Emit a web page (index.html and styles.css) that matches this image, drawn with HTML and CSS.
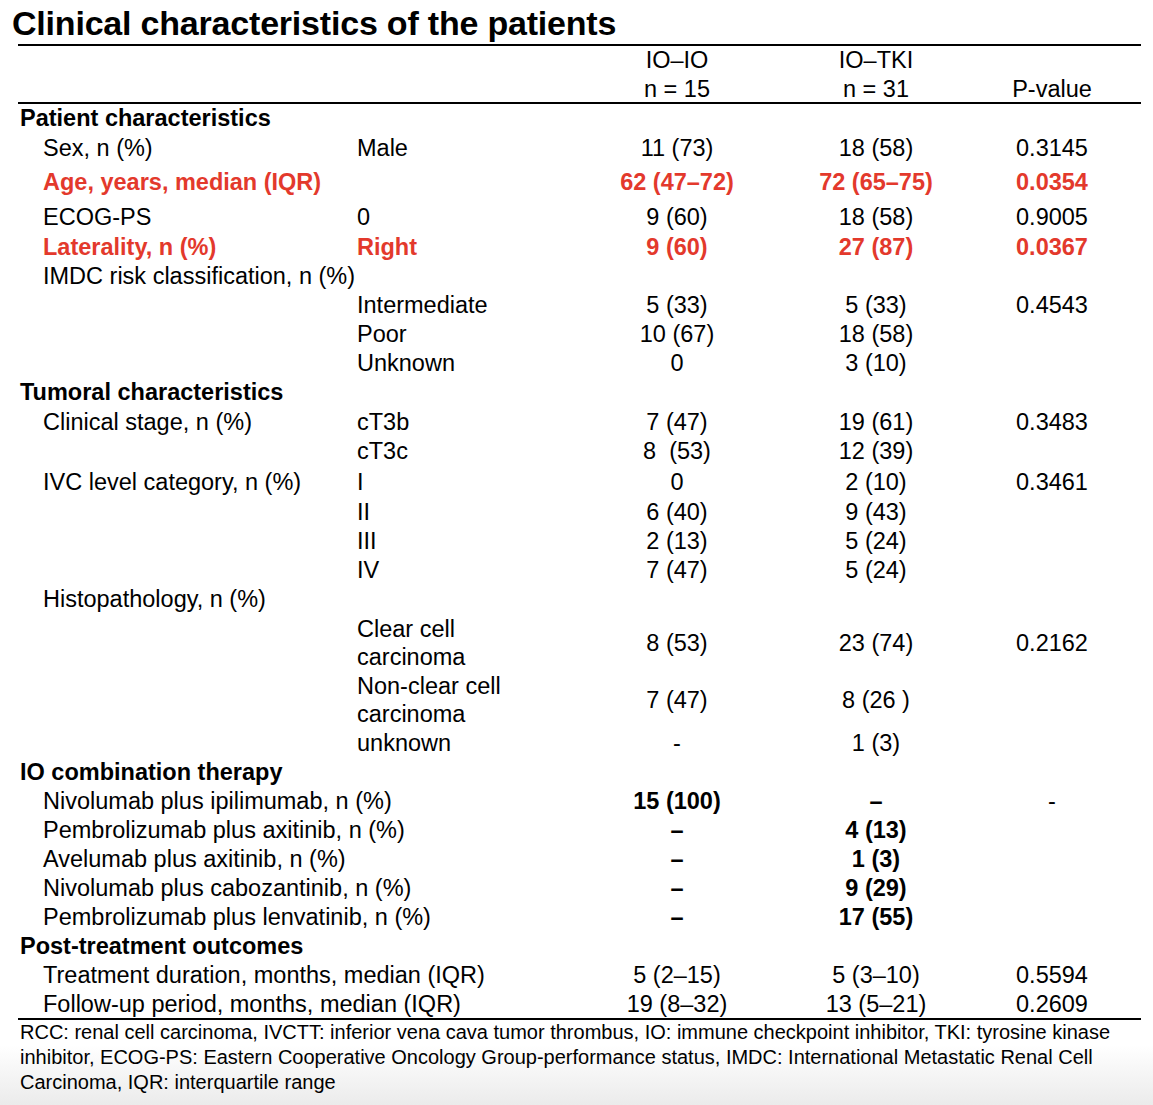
FILE: index.html
```html
<!DOCTYPE html>
<html lang="en">
<head>
  <meta charset="UTF-8" />
  <title>Clinical characteristics of the patients</title>
  <link rel="stylesheet" href="styles.css">
</head>
<body>

  <div class="title">Clinical characteristics of the patients</div>

  <table class="chars">
    <colgroup>
      <col class="c-label">
      <col class="c-sub">
      <col class="c-io">
      <col class="c-tki">
      <col class="c-p">
    </colgroup>
    <thead>
      <tr class="top">
        <td></td><td></td><td class="val">IO–IO</td><td class="val">IO–TKI</td><td class="val pv"></td>
      </tr>
      <tr class="sub">
        <td></td><td></td><td class="val">n = 15</td><td class="val">n = 31</td><td class="val pv">P-value</td>
      </tr>
    </thead>
    <tbody>
      <tr class="h30"><td class="sec" colspan="5">Patient characteristics</td></tr>
      <tr>
        <td class="lbl">Sex, n (%)</td><td>Male</td><td class="val">11 (73)</td><td class="val">18 (58)</td><td class="val pv">0.3145</td>
      </tr>
      <tr class="h40 hit">
        <td class="lbl">Age, years, median (IQR)</td><td></td><td class="val">62 (47–72)</td><td class="val">72 (65–75)</td><td class="val pv">0.0354</td>
      </tr>
      <tr class="h30">
        <td class="lbl">ECOG-PS</td><td>0</td><td class="val">9 (60)</td><td class="val">18 (58)</td><td class="val pv">0.9005</td>
      </tr>
      <tr class="hit">
        <td class="lbl">Laterality, n (%)</td><td>Right</td><td class="val">9 (60)</td><td class="val">27 (87)</td><td class="val pv">0.0367</td>
      </tr>
      <tr><td class="lbl" colspan="5">IMDC risk classification, n (%)</td></tr>
      <tr>
        <td></td><td>Intermediate</td><td class="val">5 (33)</td><td class="val">5 (33)</td><td class="val pv">0.4543</td>
      </tr>
      <tr>
        <td></td><td>Poor</td><td class="val">10 (67)</td><td class="val">18 (58)</td><td class="val pv"></td>
      </tr>
      <tr>
        <td></td><td>Unknown</td><td class="val">0</td><td class="val">3 (10)</td><td class="val pv"></td>
      </tr>

      <tr class="h30"><td class="sec" colspan="5">Tumoral characteristics</td></tr>
      <tr>
        <td class="lbl">Clinical stage, n (%)</td><td>cT3b</td><td class="val">7 (47)</td><td class="val">19 (61)</td><td class="val pv">0.3483</td>
      </tr>
      <tr class="h30">
        <td></td><td>cT3c</td><td class="val">8&nbsp; (53)</td><td class="val">12 (39)</td><td class="val pv"></td>
      </tr>
      <tr class="h32">
        <td class="lbl">IVC level category, n (%)</td><td>I</td><td class="val">0</td><td class="val">2 (10)</td><td class="val pv">0.3461</td>
      </tr>
      <tr class="h28">
        <td></td><td>II</td><td class="val">6 (40)</td><td class="val">9 (43)</td><td class="val pv"></td>
      </tr>
      <tr>
        <td></td><td>III</td><td class="val">2 (13)</td><td class="val">5 (24)</td><td class="val pv"></td>
      </tr>
      <tr>
        <td></td><td>IV</td><td class="val">7 (47)</td><td class="val">5 (24)</td><td class="val pv"></td>
      </tr>
      <tr><td class="lbl" colspan="5">Histopathology, n (%)</td></tr>
      <tr class="h58 two">
        <td></td><td>Clear cell<br>carcinoma</td><td class="val">8 (53)</td><td class="val">23 (74)</td><td class="val pv">0.2162</td>
      </tr>
      <tr class="h57 two">
        <td></td><td>Non-clear cell<br>carcinoma</td><td class="val">7 (47)</td><td class="val">8 (26 )</td><td class="val pv"></td>
      </tr>
      <tr>
        <td></td><td>unknown</td><td class="val">-</td><td class="val">1 (3)</td><td class="val pv"></td>
      </tr>

      <tr><td class="sec" colspan="5">IO combination therapy</td></tr>
      <tr>
        <td class="lbl" colspan="2">Nivolumab plus ipilimumab, n (%)</td><td class="val b">15 (100)</td><td class="val b">–</td><td class="val pv">-</td>
      </tr>
      <tr>
        <td class="lbl" colspan="2">Pembrolizumab plus axitinib, n (%)</td><td class="val b">–</td><td class="val b">4 (13)</td><td class="val pv"></td>
      </tr>
      <tr>
        <td class="lbl" colspan="2">Avelumab plus axitinib, n (%)</td><td class="val b">–</td><td class="val b">1 (3)</td><td class="val pv"></td>
      </tr>
      <tr>
        <td class="lbl" colspan="2">Nivolumab plus cabozantinib, n (%)</td><td class="val b">–</td><td class="val b">9 (29)</td><td class="val pv"></td>
      </tr>
      <tr>
        <td class="lbl" colspan="2">Pembrolizumab plus lenvatinib, n (%)</td><td class="val b">–</td><td class="val b">17 (55)</td><td class="val pv"></td>
      </tr>

      <tr><td class="sec" colspan="5">Post-treatment outcomes</td></tr>
      <tr>
        <td class="lbl" colspan="2">Treatment duration, months, median (IQR)</td><td class="val">5 (2–15)</td><td class="val">5 (3–10)</td><td class="val pv">0.5594</td>
      </tr>
      <tr class="last">
        <td class="lbl" colspan="2">Follow-up period, months, median (IQR)</td><td class="val">19 (8–32)</td><td class="val">13 (5–21)</td><td class="val pv">0.2609</td>
      </tr>
    </tbody>
  </table>

  <p class="note">RCC: renal cell carcinoma, IVCTT: inferior vena cava tumor thrombus, IO: immune checkpoint inhibitor, TKI: tyrosine kinase inhibitor, ECOG-PS: Eastern Cooperative Oncology Group-performance status, IMDC: International Metastatic Renal Cell Carcinoma, IQR: interquartile range</p>

</body>
</html>
```

FILE: styles.css
```css
* {
  box-sizing: border-box;
}

html {
  background: linear-gradient(to bottom, #ffffff 0, #ffffff 1045px, #ebebeb 1105px);
  min-height: 1105px;
}

body {
  margin: 0;
  font-family: "Liberation Sans", Arial, sans-serif;
  color: #000;
}

.title {
  font-size: 34px;
  line-height: 34px;
  font-weight: bold;
  letter-spacing: -0.2px;
  margin: 6px 0 4px 12px;
}

.chars {
  border-collapse: separate;
  border-spacing: 0;
  table-layout: fixed;
  width: 1123px;
  margin-left: 18px;
  font-size: 23.5px;
}

.c-label { width: 339px; }
.c-sub   { width: 220px; }
.c-io    { width: 200px; }
.c-tki   { width: 198px; }
.c-p     { width: 166px; }

.chars td {
  padding: 0;
  height: 29px;
  line-height: 22px;
  vertical-align: middle;
  white-space: nowrap;
}

/* glyphs sit a bit low in the line box, nudge them up */
.chars tbody td {
  padding-bottom: 2px;
}

.chars tbody .two td {
  line-height: 28px;
  padding-bottom: 1px;
}

.chars thead .top td {
  border-top: 2px solid #000;
  height: 32px;
  padding-bottom: 3px;
}

.chars thead .sub td {
  border-bottom: 2px solid #000;
  height: 28px;
}

.chars .last td {
  border-bottom: 2px solid #000;
  height: 30px;
  padding-bottom: 1px;
}

.chars .h28 td { height: 28px; }
.chars .h30 td { height: 30px; }
.chars .h32 td { height: 32px; }
.chars .h40 td { height: 40px; }
.chars .h57 td { height: 57px; }
.chars .h58 td { height: 58px; }

.sec {
  font-weight: bold;
  padding-left: 2px !important;
}

.lbl {
  padding-left: 25px !important;
}

.val {
  text-align: center;
}

.pv {
  padding-right: 12px !important;
}

.b {
  font-weight: bold;
}

.hit td {
  color: #e3392c;
  font-weight: bold;
}

.note {
  margin: 0 0 0 20px;
  width: 1115px;
  font-size: 20px;
  line-height: 25px;
}
```
